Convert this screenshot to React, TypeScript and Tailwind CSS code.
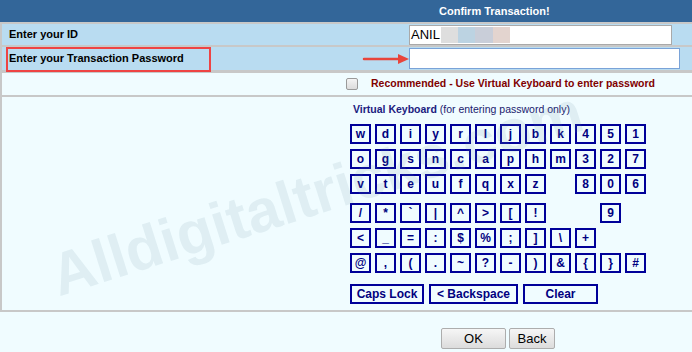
import React from 'react'

const ROWS_A: (string | null)[][] = [
  ['w', 'd', 'i', 'y', 'r', 'l', 'j', 'b', 'k', '4', '5', '1'],
  ['o', 'g', 's', 'n', 'c', 'a', 'p', 'h', 'm', '3', '2', '7'],
  ['v', 't', 'e', 'u', 'f', 'q', 'x', 'z', null, '8', '0', '6'],
]

const ROWS_B: (string | null)[][] = [
  ['/', '*', '`', '|', '^', '>', '[', '!', null, null, '9', null],
  ['<', '_', '=', ':', '$', '%', ';', ']', '\\', '+', null, null],
  ['@', ',', '(', '.', '~', '?', '-', ')', '&', '{', '}', '#'],
]

function Key({ k }: { k: string | null }) {
  if (k === null) return <div className="h-[20px] w-[21px]" />
  return (
    <div className="flex h-[20px] w-[21px] items-center justify-center border-2 border-[#000099] text-[12px] font-bold leading-none text-[#000080]">
      {k}
    </div>
  )
}

function KeyGroup({ rows }: { rows: (string | null)[][] }) {
  return (
    <div className="flex flex-col gap-[5px]">
      {rows.map((row, i) => (
        <div key={i} className="flex gap-[4px]">
          {row.map((k, j) => (
            <Key key={j} k={k} />
          ))}
        </div>
      ))}
    </div>
  )
}

function WideKey({ label, w }: { label: string; w: string }) {
  return (
    <div
      className={`flex h-[20px] items-center justify-center border-2 border-[#000099] text-[12px] font-bold leading-none text-[#000080] ${w}`}
    >
      {label}
    </div>
  )
}

export default function App() {
  return (
    <div
      className="relative h-[352px] w-[692px] overflow-hidden bg-[#f0fcff]"
      style={{ fontFamily: '"Liberation Sans", Arial, sans-serif' }}
    >
      {/* header */}
      <div className="flex h-[22px] items-center bg-[#336699] pl-[439px] text-[11px] font-bold text-white">
        Confirm Transaction!
      </div>

      <div className="border-l-2 border-[#c8c8c8]">
        <div className="h-[2px] bg-[#c8c8c8]" />
        <div className="flex h-[21px] items-center bg-[#b9dcf1]">
          <div className="w-[407px] pl-[7px] text-[11px] font-bold text-black">Enter your ID</div>
          <div className="flex h-[20px] w-[263px] items-center border border-[#a9a9a9] bg-white pl-[1px] text-[13px] text-black">
            ANIL
            <span className="ml-[1px] h-[16px] w-[17px] bg-[#dedede]" />
            <span className="h-[16px] w-[17px] bg-[#bcd3e2]" />
            <span className="h-[16px] w-[18px] bg-[#c9ced9]" />
            <span className="h-[16px] w-[17px] bg-[#e3d4cf]" />
          </div>
        </div>
        <div className="h-[2px] bg-[#c8c8c8]" />
        <div className="flex h-[23px] items-center bg-[#b9dcf1]">
          <div className="w-[407px] pl-[7px] text-[11px] font-bold text-black">
            Enter your Transaction Password
          </div>
          <div className="h-[21px] w-[271px] border border-[#7aa3d8] bg-white" />
        </div>
        <div className="h-[3px] bg-[#c8c8c8]" />
        <div className="flex h-[22px] items-center pl-[344px]">
          <div className="h-[12px] w-[12px] rounded-[2px] border border-[#9a9a9a] bg-gradient-to-b from-[#f4f4f4] to-[#dcdcdc]" />
          <div className="ml-[13px] text-[10.5px] font-bold text-[#800000]">
            Recommended - Use Virtual Keyboard to enter password
          </div>
        </div>
        <div className="h-[2px] bg-[#c8c8c8]" />

        {/* virtual keyboard */}
        <div className="h-[213px] pl-[348px] pt-[5px]">
          <div className="ml-[3px] h-[14px] text-[10.5px] leading-[14px] text-[#1a1a6e]">
            <span className="font-bold text-[#1c2080]">Virtual Keyboard</span> (for entering password only)
          </div>
          <div className="mt-[8px]">
            <KeyGroup rows={ROWS_A} />
          </div>
          <div className="mt-[9px]">
            <KeyGroup rows={ROWS_B} />
          </div>
          <div className="mt-[11px] flex gap-[5px]">
            <WideKey label="Caps Lock" w="w-[74px]" />
            <WideKey label="< Backspace" w="w-[89px]" />
            <WideKey label="Clear" w="w-[75px]" />
          </div>
        </div>
        <div className="h-[2px] bg-[#c8c8c8]" />
      </div>

      {/* buttons */}
      <div className="mt-[16px] flex gap-[3px] pl-[441px]">
        <button className="h-[21px] w-[65px] rounded-[2px] border border-[#adadad] bg-gradient-to-b from-[#f6f6f6] to-[#dcdcdc] text-[13px] leading-none text-black">
          OK
        </button>
        <button className="h-[21px] w-[46px] rounded-[2px] border border-[#adadad] bg-gradient-to-b from-[#f6f6f6] to-[#dcdcdc] text-[13px] leading-none text-black">
          Back
        </button>
      </div>

      {/* watermark */}
      <div
        className="pointer-events-none absolute left-[62px] top-[246px] origin-bottom-left -rotate-[17.6deg] whitespace-nowrap text-[60px] font-bold leading-[60px] text-[rgba(110,150,160,0.13)]"
      >
        Alldigitaltricks.com
      </div>

      {/* annotations */}
      <div className="pointer-events-none absolute left-[6px] top-[47px] h-[25px] w-[205px] border-2 border-[#ee4444]" />
      <svg className="pointer-events-none absolute left-[362px] top-[53px]" width="50" height="12" viewBox="0 0 50 12">
        <line x1="2" y1="6" x2="38" y2="6" stroke="#e8453c" strokeWidth="2.5" strokeLinecap="round" />
        <polygon points="36,1 47,6 36,11" fill="#e8453c" />
      </svg>
    </div>
  )
}
